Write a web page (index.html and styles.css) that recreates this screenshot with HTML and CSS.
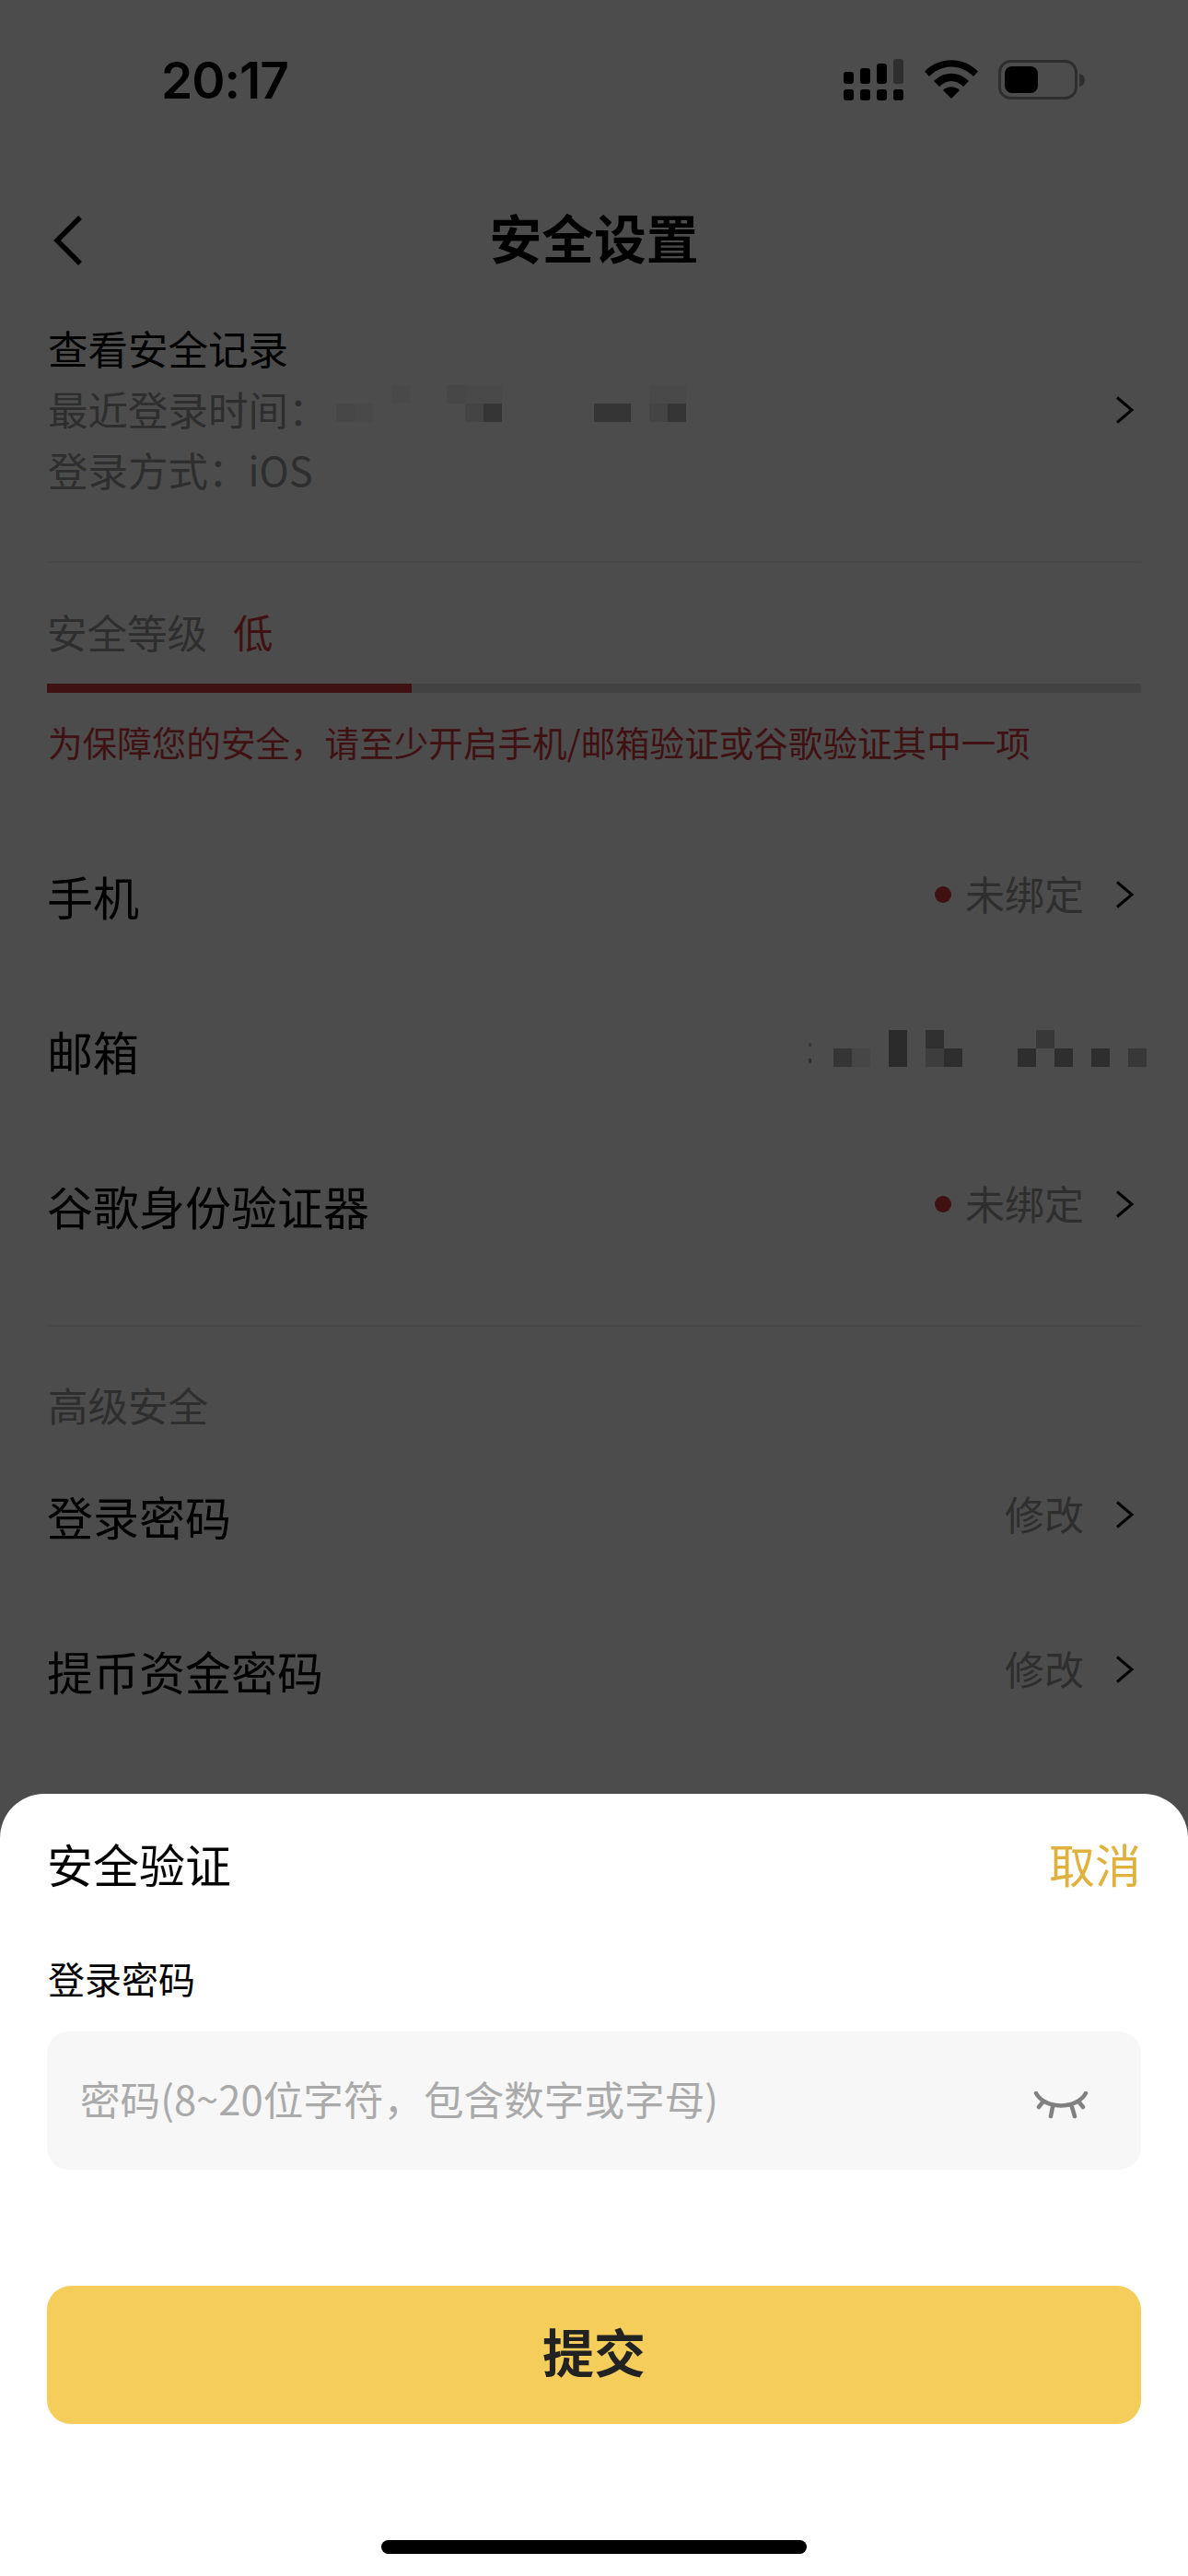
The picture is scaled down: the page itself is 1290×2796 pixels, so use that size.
FILE: index.html
```html
<!DOCTYPE html>
<html lang="zh-CN">
<head>
<meta charset="utf-8">
<title>安全设置</title>
<link rel="stylesheet" href="styles.css">
</head>
<body>
<div class="page">
  <header class="status">
    <span class="time">20:17</span>
    <div class="status-icons">
      <svg class="sig" width="66" height="46" viewBox="0 0 66 46">
        <g fill="#000">
          <rect x="0" y="14" width="11" height="13" rx="3"/>
          <rect x="18" y="10" width="11" height="17" rx="3"/>
          <rect x="36" y="5" width="11" height="22" rx="3"/>
          <rect x="54" y="0" width="11" height="27" rx="3" fill="#999"/>
          <rect x="0" y="33" width="11" height="12" rx="3"/>
          <rect x="18" y="33" width="11" height="12" rx="3"/>
          <rect x="36" y="33" width="11" height="12" rx="3"/>
          <rect x="54" y="33" width="11" height="12" rx="3"/>
        </g>
      </svg>
      <svg class="wifi" width="58" height="42" viewBox="0 0 58 42">
        <path d="M0 12.500C16-4 42-4 58 12.500L53 18C39 4 19 4 5 18Z" fill="#000"/>
        <path d="M10 23C21 12 37 12 48 23L42 29C34 21 24 21 16 29Z" fill="#000"/>
        <path d="M20 33C25 28 33 28 38 33L29 42Z" fill="#000"/>
      </svg>
      <svg class="batt" width="94" height="44" viewBox="0 0 94 44">
        <rect x="1.500" y="1.500" width="83" height="40" rx="12" fill="none" stroke="#999" stroke-width="3"/>
        <rect x="7" y="7" width="36" height="29" rx="8" fill="#000"/>
        <path d="M88 15C92 16 94 19 94 22C94 25 92 28 88 29Z" fill="#999"/>
      </svg>
    </div>
  </header>

  <nav class="nav">
    <svg class="back" width="32" height="54" viewBox="0 0 32 54"><path d="M29 2L4 27L29 52" fill="none" stroke="#000" stroke-width="5.500"/></svg>
    <h1 class="title">安全设置</h1>
  </nav>

  <section class="record">
    <div class="record-text">
      <div class="line dark">查看安全记录</div>
      <div class="line gray login-time">最近登录时间：
        <div class="mosaic mosaic-time">
          <div class="m-row"><i class="c"></i><i class="c"></i><i class="c"></i><i class="c l0"></i><i class="c"></i><i class="c"></i><i class="c l1"></i><i class="c l0"></i><i class="c l0"></i><i class="c"></i><i class="c"></i><i class="c"></i><i class="c"></i><i class="c"></i><i class="c"></i><i class="c"></i><i class="c"></i><i class="c l0"></i><i class="c l0"></i></div>
          <div class="m-row"><i class="c l1"></i><i class="c l0"></i><i class="c"></i><i class="c"></i><i class="c"></i><i class="c"></i><i class="c"></i><i class="c l2"></i><i class="c l4"></i><i class="c"></i><i class="c"></i><i class="c"></i><i class="c"></i><i class="c"></i><i class="c l4"></i><i class="c l4"></i><i class="c"></i><i class="c l2"></i><i class="c l4"></i></div>
        </div>
      </div>
      <div class="line gray">登录方式：iOS</div>
    </div>
    <svg class="chev" width="22" height="30" viewBox="0 0 22 30"><path d="M3 1.500L19 15L3 28.500" fill="none" stroke="#000" stroke-width="3"/></svg>
  </section>

  <hr class="rule">

  <section class="level">
    <div class="level-head"><span class="gray">安全等级</span><span class="red level-low">低</span></div>
    <div class="bar"><div class="bar-fill"></div></div>
    <p class="warn red">为保障您的安全，请至少开启手机/邮箱验证或谷歌验证其中一项</p>
  </section>

  <section class="rows">
    <div class="row">
      <span class="label">手机</span>
      <div class="right"><i class="dot"></i><span class="gray">未绑定</span><svg class="chev" width="22" height="30" viewBox="0 0 22 30"><path d="M3 1.500L19 15L3 28.500" fill="none" stroke="#000" stroke-width="3"/></svg></div>
    </div>
    <div class="row">
      <span class="label">邮箱</span>
      <div class="mail-mask">
        <div class="specks"><i class="speck"></i><i class="speck speck-low"></i></div>
        <div class="mosaic">
          <div class="m-row"><i class="c"></i><i class="c"></i><i class="c"></i><i class="c m1"></i><i class="c"></i><i class="c m3"></i><i class="c"></i><i class="c"></i><i class="c"></i><i class="c"></i><i class="c"></i><i class="c m5"></i></div>
          <div class="m-row"><i class="c m4"></i><i class="c m6"></i><i class="c"></i><i class="c m1"></i><i class="c"></i><i class="c m7"></i><i class="c m2"></i><i class="c"></i><i class="c"></i><i class="c"></i><i class="c m2"></i><i class="c"></i><i class="c m2"></i><i class="c"></i><i class="c m2"></i><i class="c"></i><i class="c m5"></i></div>
        </div>
      </div>
    </div>
    <div class="row">
      <span class="label">谷歌身份验证器</span>
      <div class="right"><i class="dot"></i><span class="gray">未绑定</span><svg class="chev" width="22" height="30" viewBox="0 0 22 30"><path d="M3 1.500L19 15L3 28.500" fill="none" stroke="#000" stroke-width="3"/></svg></div>
    </div>
  </section>

  <hr class="rule rule-mid">

  <section class="advanced">
    <div class="adv-title gray">高级安全</div>
    <div class="row">
      <span class="label">登录密码</span>
      <div class="right"><span class="gray">修改</span><svg class="chev" width="22" height="30" viewBox="0 0 22 30"><path d="M3 1.500L19 15L3 28.500" fill="none" stroke="#000" stroke-width="3"/></svg></div>
    </div>
    <div class="row">
      <span class="label">提币资金密码</span>
      <div class="right"><span class="gray">修改</span><svg class="chev" width="22" height="30" viewBox="0 0 22 30"><path d="M3 1.500L19 15L3 28.500" fill="none" stroke="#000" stroke-width="3"/></svg></div>
    </div>
  </section>

  <div class="overlay"></div>

  <section class="sheet">
    <div class="sheet-head"><span class="sheet-title">安全验证</span><span class="cancel">取消</span></div>
    <div class="field-label">登录密码</div>
    <div class="input">
      <span class="placeholder">密码(8~20位字符，包含数字或字母)</span>
      <svg class="eye" width="62" height="32" viewBox="0 0 62 32"><g fill="none" stroke="#808080" stroke-width="4.500" stroke-linecap="round"><path d="M4 2C14 20 48 20 58 2"/><path d="M22 17L20 27"/><path d="M43 17L46 27"/><path d="M11 12L7 17"/><path d="M51 12L55 17"/></g></svg>
    </div>
    <button class="submit">提交</button>
    <div class="home"></div>
  </section>
</div>
</body>
</html>
```
FILE: styles.css
```css
* { box-sizing: border-box; }
html, body { margin: 0; padding: 0; }
body { font-family: "Noto Sans CJK SC", "Noto Sans", sans-serif; }
.page { position: relative; width: 1290px; height: 2796px; overflow: hidden; background: #fff; color: #000; }

.status { height: 171px; padding: 60px 112px 0 175px; display: flex; justify-content: space-between; align-items: flex-start; }
.time { font-family: "Inter", sans-serif; font-weight: 600; font-size: 55px; line-height: 54px; letter-spacing: -1px; }
.status-icons { display: flex; align-items: flex-start; }
.sig { margin-top: 4px; margin-right: 22px; }
.wifi { margin-top: 5px; margin-right: 22px; }
.batt { margin-top: 5px; }

.nav { height: 172px; position: relative; display: flex; align-items: center; justify-content: center; padding-bottom: 2px; }
.back { position: absolute; left: 58px; top: 63px; }
.title { margin: 0; font-size: 56.800px; font-weight: 700; line-height: 72px; }

.record { padding: 2px 51px 0 52px; height: 266px; display: flex; justify-content: space-between; }
.record .chev { margin-top: 85px; margin-right: 7px; }
.line { font-size: 43.500px; line-height: 66px; height: 66px; white-space: nowrap; }
.dark { color: #000; }
.gray { color: #999; }
.red { color: #d63a3f; }
.login-time { position: relative; }

.mosaic { display: flex; flex-direction: column; }
.mosaic-time { position: absolute; left: 313px; top: 7px; }
.m-row { display: flex; height: 20px; }
.c { display: block; width: 20px; height: 20px; flex: none; }
.l0 { background: #f5f5f5; }
.l1 { background: #eeeeee; }
.l2 { background: #e3e3e3; }
.l4 { background: #b1b1b1; }
.m1 { background: #8f8f8f; }
.m2 { background: #999999; }
.m3 { background: #a0a0a0; }
.m4 { background: #b1b1b1; }
.m5 { background: #bbbbbb; }
.m6 { background: #e9e9e9; }
.m7 { background: #cbcbcb; }

.mail-mask { display: flex; margin-right: -6px; padding-bottom: 8px; }
.specks { width: 3px; margin-right: 24px; padding-top: 14px; display: flex; flex-direction: column; gap: 13px; }
.speck { display: block; height: 4px; background: #bbbbbb; }
.speck-low { height: 5px; background: #a0a0a0; }

.rule { margin: 0 51px; border: 0; height: 2px; background: #eee; }

.level { padding: 0 51px; height: 279px; }
.level-head { padding-top: 42px; font-size: 43.500px; line-height: 66px; height: 131px; }
.level-low { margin-left: 28px; }
.bar { height: 10px; background: #dcdcdc; }
.bar-fill { width: 396px; height: 10px; background: #d63a3f; }
.warn { margin: 0; padding-left: 1px; padding-top: 28px; font-size: 37.600px; line-height: 50px; white-space: nowrap; }

.rows { padding: 0 51px 0 51px; }
.row { height: 168px; display: flex; align-items: center; justify-content: space-between; }
.label { font-size: 50px; line-height: 68px; padding-bottom: 5px; }
.right { display: flex; align-items: center; font-size: 43px; line-height: 60px; padding-bottom: 10px; }
.right .chev { margin-left: 33px; margin-right: 7px; margin-top: 4px; }
.dot { display: block; width: 18px; height: 18px; border-radius: 50%; background: #d63a3f; margin-right: 15px; margin-top: 4px; }

.rule-mid { margin-top: 44px; }

.advanced { padding: 0 51px; }
.adv-title { padding-top: 53px; padding-left: 1px; font-size: 43.500px; line-height: 64px; height: 123px; }

.overlay { position: absolute; inset: 0; background: rgba(0, 0, 0, 0.7); }

.sheet { position: absolute; left: 0; right: 0; top: 1947px; bottom: 0; background: #fff; border-radius: 48px 48px 0 0; padding: 41px 51px 0; display: flex; flex-direction: column; }
.sheet-head { display: flex; justify-content: space-between; font-size: 50px; line-height: 68px; }
.cancel { color: #e0b13c; }
.field-label { margin-top: 63px; padding-left: 1px; font-size: 40px; line-height: 56px; }
.input { margin-top: 30px; height: 150px; flex: none; border-radius: 24px; background: #f7f7f7; display: flex; align-items: center; justify-content: space-between; padding: 0 56px 0 36px; }
.placeholder { font-size: 43.600px; line-height: 56px; color: #aaa; padding-bottom: 6px; }
.eye { margin-top: 12px; }
.submit { margin-top: 126px; height: 150px; flex: none; border: 0; border-radius: 26px; background: #f4cd5a; color: #222; font-family: inherit; font-weight: 700; font-size: 56px; padding: 0 0 12px; }
.home { position: absolute; left: 414px; bottom: 24px; width: 462px; height: 15px; border-radius: 8px; background: #000; }
```
